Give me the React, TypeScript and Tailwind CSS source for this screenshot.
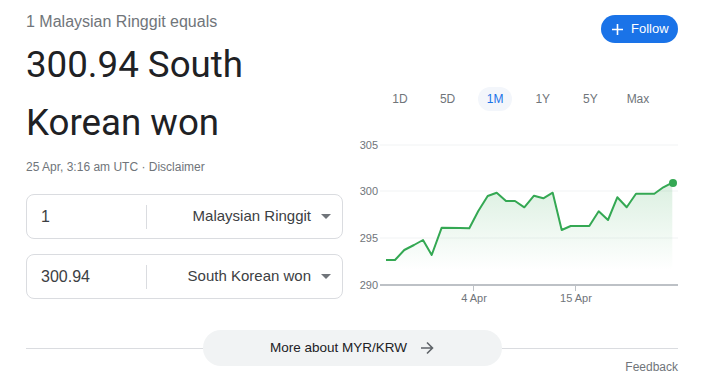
const points: [number, number][] = [
  [31, 125], [40, 125], [49.3, 115], [59, 110], [68, 105], [76.7, 120], [86.7, 92.7],
  [105, 93], [114.3, 93.3], [123.3, 76], [132.7, 61], [141.7, 57.7], [151, 66], [160, 66],
  [169.3, 72.3], [179, 60.7], [188.3, 63.3], [197.7, 57.7], [206.7, 95], [215.7, 91],
  [225, 91], [234.3, 91], [243.7, 76.3], [253, 85], [262.3, 62.3], [271.7, 72.3],
  [281, 58.7], [290, 58.7], [299.3, 58.7], [308.3, 52.3], [317.3, 47.7],
];

const ranges = ['1D', '5D', '1M', '1Y', '5Y', 'Max'];

const Chart = () => {
  const line = points.map((p) => p.join(',')).join(' ');
  const area = `31,150 ${line} 317.3,150`;
  const yLabels: [string, number][] = [
    ['305', 10],
    ['300', 56],
    ['295', 103],
    ['290', 150],
  ];
  return (
    <svg width="323" height="175" viewBox="0 0 323 175" className="block">
      <defs>
        <linearGradient id="fill" x1="0" y1="47" x2="0" y2="135" gradientUnits="userSpaceOnUse">
          <stop offset="0" stopColor="#34a853" stopOpacity="0.18" />
          <stop offset="1" stopColor="#34a853" stopOpacity="0" />
        </linearGradient>
      </defs>
      {yLabels.map(([label, y]) => (
        <g key={label}>
          <text x="23" y={y + 4} textAnchor="end" fontSize="11" fill="#70757a" fontFamily="Liberation Sans, Arial, sans-serif">
            {label}
          </text>
          {label !== '290' && <line x1="25" x2="323" y1={y} y2={y} stroke="#f1f3f4" strokeWidth="1" />}
        </g>
      ))}
      <polygon points={area} fill="url(#fill)" />
      <polyline points={line} fill="none" stroke="#34a853" strokeWidth="2" strokeLinejoin="round" />
      <circle cx="318" cy="48" r="4" fill="#34a853" />
      <line x1="25" x2="323" y1="150" y2="150" stroke="#bdc1c6" strokeWidth="2" />
      <line x1="118.5" x2="118.5" y1="150" y2="156" stroke="#bdc1c6" strokeWidth="1" />
      <line x1="220.5" x2="220.5" y1="150" y2="156" stroke="#bdc1c6" strokeWidth="1" />
      <text x="119" y="167" textAnchor="middle" fontSize="11" fill="#70757a" fontFamily="Liberation Sans, Arial, sans-serif">
        4 Apr
      </text>
      <text x="221" y="167" textAnchor="middle" fontSize="11" fill="#70757a" fontFamily="Liberation Sans, Arial, sans-serif">
        15 Apr
      </text>
    </svg>
  );
};

const CurrencyBox = ({ value, currency }: { value: string; currency: string }) => {
  return (
    <div className="flex items-center h-[45px] border border-[#dadce0] rounded-lg">
      <div className="w-[119px] pl-[14px] text-[16px] text-[#3c4043]">{value}</div>
      <div className="w-px h-[24px] bg-[#dadce0]"></div>
      <div className="flex-1 text-right text-[15px] text-[#3c4043] pr-[10px]">{currency}</div>
      <svg width="10" height="5" viewBox="0 0 10 5" className="mr-[11px]">
        <path d="M0 0 L10 0 L5 5 Z" fill="#70757a" />
      </svg>
    </div>
  );
};

export default function App() {
  return (
    <div className="w-[715px] h-[387px] bg-white pl-[26px] pr-[37px] pt-[12px] font-['Liberation_Sans',Arial,sans-serif] overflow-hidden">
      <div className="flex">
        {/* left */}
        <div className="w-[317px]">
          <div className="text-[16px] leading-[20px] text-[#70757a]">1 Malaysian Ringgit equals</div>
          <div className="mt-[4px] text-[36.7px] leading-[58px] text-[#202124] font-['Roboto',sans-serif]">
            300.94 South Korean won
          </div>
          <div className="mt-[7px] text-[12px] leading-[16px] text-[#70757a]">25 Apr, 3:16 am UTC · Disclaimer</div>
          <div className="mt-[19px]">
            <CurrencyBox value="1" currency="Malaysian Ringgit" />
          </div>
          <div className="mt-[15px]">
            <CurrencyBox value="300.94" currency="South Korean won" />
          </div>
        </div>

        {/* right */}
        <div className="ml-[12px] w-[323px]">
          <div className="flex justify-end mt-[3px]">
            <button className="flex items-center h-[28px] w-[77px] pl-[11px] rounded-full bg-[#1a73e8] text-white text-[13px]">
              <svg width="11" height="11" viewBox="0 0 11 11" className="mr-[8px]">
                <path d="M5.5 0 V11 M0 5.5 H11" stroke="white" strokeWidth="1.6" />
              </svg>
              Follow
            </button>
          </div>
          <div className="flex gap-[13.6px] ml-[28px] mt-[44px]">
            {ranges.map((r) => (
              <div
                key={r}
                className={
                  r === '1M'
                    ? 'w-[34px] h-[24px] flex items-center justify-center rounded-full bg-[#f3f6fb] text-[12px] text-[#1a73e8]'
                    : 'w-[34px] h-[24px] flex items-center justify-center text-[12px] text-[#70757a]'
                }
              >
                {r}
              </div>
            ))}
          </div>
          <div className="mt-[24px]">
            <Chart />
          </div>
        </div>
      </div>

      {/* bottom */}
      <div className="flex items-center mt-[20px]">
        <div className="flex-1 h-px bg-[#dadce0]"></div>
        <button className="flex items-center justify-center w-[299px] h-[36px] rounded-full bg-[#f1f3f4] text-[13.5px] text-[#202124]">
          More about MYR/KRW
          <svg width="14" height="14" viewBox="0 0 14 14" className="ml-[13px]">
            <path d="M1 7 H12.5 M7 1.5 L12.5 7 L7 12.5" fill="none" stroke="#5f6368" strokeWidth="1.6" />
          </svg>
        </button>
        <div className="flex-1 h-px bg-[#dadce0]"></div>
      </div>
      <div className="-mt-[7px] text-right text-[12px] leading-[16px] text-[#70757a]">Feedback</div>
    </div>
  );
}
